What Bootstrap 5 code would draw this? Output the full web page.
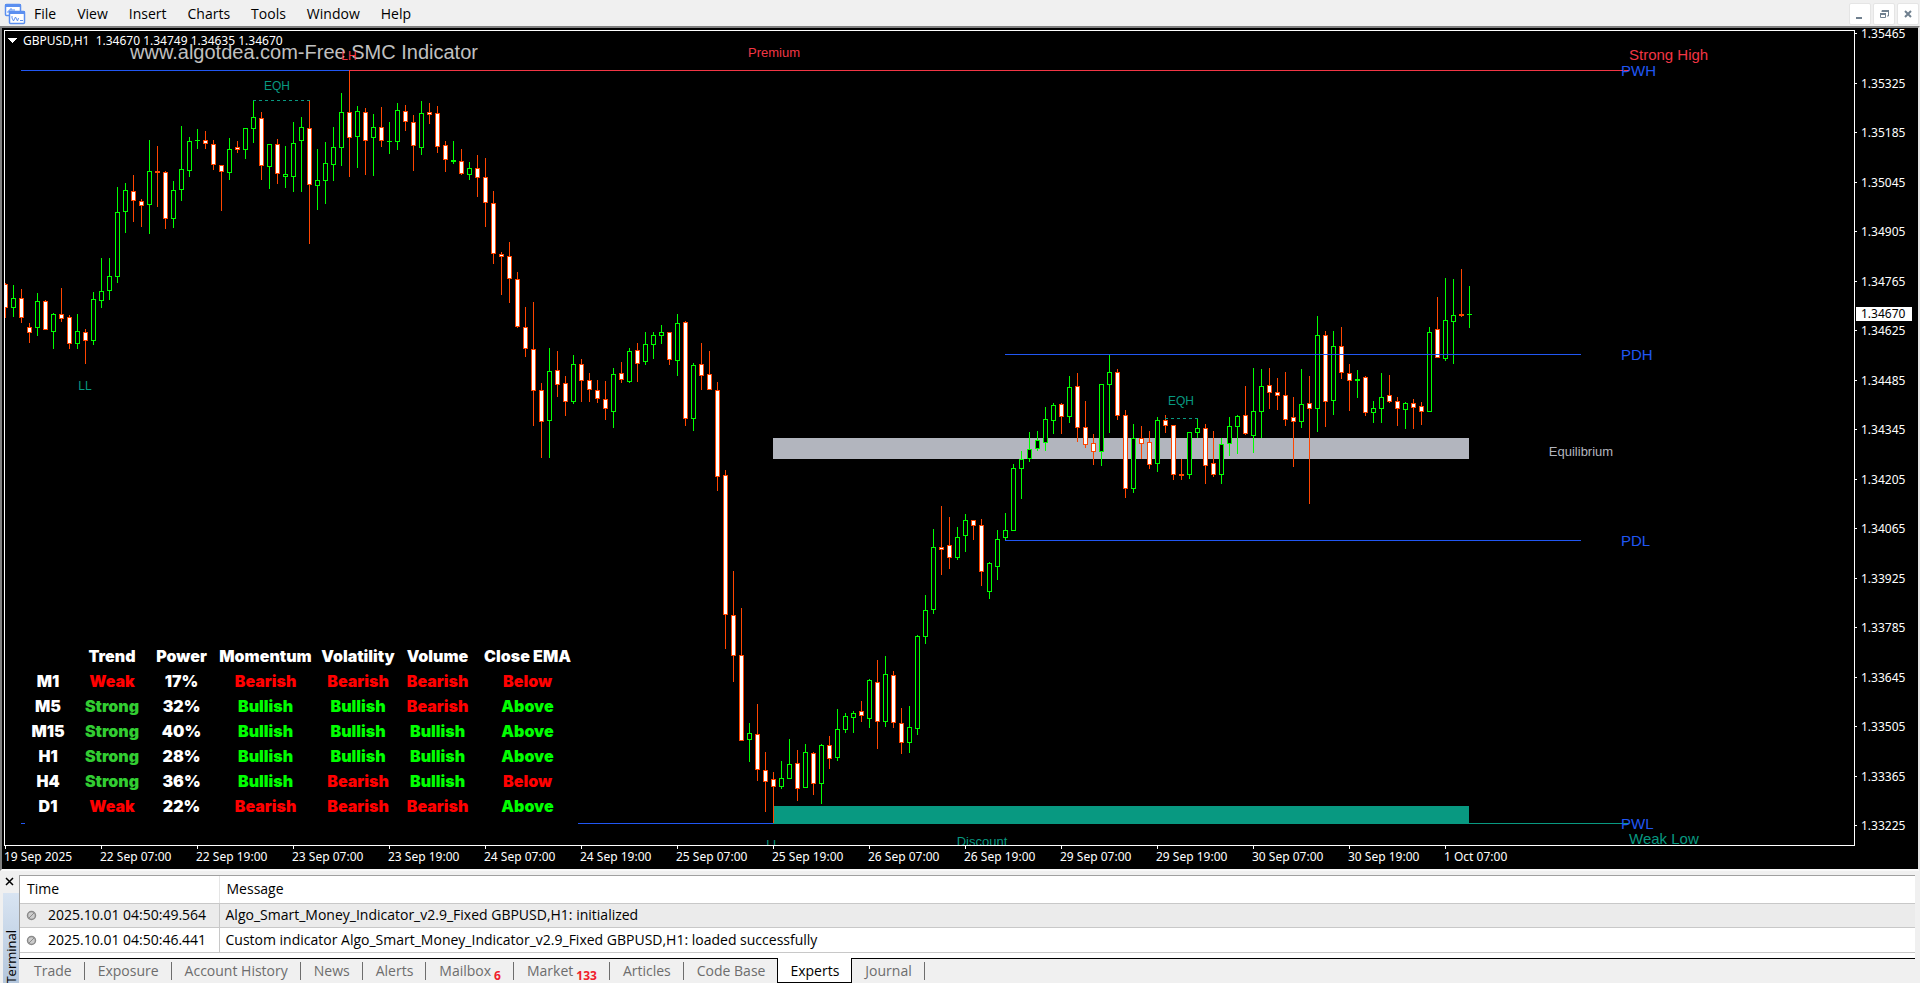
<!DOCTYPE html>
<html lang="en">
<head>
<meta charset="utf-8">
<meta name="viewport" content="width=device-width, initial-scale=1">
<title>GBPUSD,H1</title>
<link href="https://cdn.jsdelivr.net/npm/bootstrap@5.3.0/dist/css/bootstrap.min.css" rel="stylesheet">
<style>
  body { background: #f0f0f0; color: #000; font: 14px/20px "Open Sans", "Noto Sans", sans-serif; }
  button { font: inherit; color: inherit; }

  /* menu bar */
  .menubar { height: 26px; padding: 2px 1px 0 4px; }
  .menubar .app-icon { width: 22px; height: 22px; margin-right: 8px; }
  .menubar .menu-item { color: #000; margin-right: 21px; line-height: 24px; text-decoration: none; }
  .mdi { gap: 2px; }
  .mdi button { width: 22px; height: 22px; border: 1px solid #e5e5e5; border-radius: 2px; background: #fff; }

  /* chart window */
  .chart-window { min-height: 0; background: #000; border: 2px solid; border-color: #808080 #e3e3e3 #f8f8f8 #808080;
    display: grid; grid-template: minmax(0, 1fr) 23px / minmax(0, 1fr) 63px; }
  .plot { margin: 2px 0 0 2px; border: 1px solid #fff; overflow: hidden; }
  .plot > svg { display: block; width: 100%; height: 100%; }
  .plot text { font-family: "Liberation Sans", Arial, sans-serif; }
  .plot .t12 { font-size: 12px; }
  .plot .t13 { font-size: 13px; }
  .plot .t15 { font-size: 15px; }
  .plot .t20 { font-size: 20px; }
  .plot .legend-text { font: 12px "Noto Sans", sans-serif; }
  .c-red { fill: #f23645; } .c-blue { fill: #2157f3; } .c-teal { fill: #089981; }
  .axis { font: 12px/11px "Noto Sans", sans-serif; color: #fff; }
  .price-axis { padding: 0 0 15px; }
  .price-axis li { position: relative; padding-left: 6px; }
  .price-axis li::before { content: ""; position: absolute; left: 0; top: 5px; width: 2px; height: 1px; background: #fff; }
  .price-now { top: 279px; left: 1px; width: 56px; padding-left: 5px; line-height: 14px; background: #fff; color: #000; }
  .time-axis { padding-left: 3px; overflow: hidden; }
  .time-axis li { position: relative; flex: 0 0 96px; padding-top: 5px; text-indent: -1px; white-space: nowrap; }
  .time-axis li::before { content: ""; position: absolute; left: 0; top: 0; width: 1px; height: 3px; background: #fff; }

  /* multi-timeframe panel laid over the chart */
  .mtf { left: 20px; bottom: 15px; width: 553px; padding: 4px 3px 11px 0; background: #000; }
  .mtf table { width: 550px; table-layout: fixed; font: 900 16px/25px Inter, "Arial Black", sans-serif; text-align: center; color: #fff; white-space: nowrap; }
  .mtf th, .mtf td { padding: 0; font-weight: 900; text-align: center; }
  .up { color: #0f0; } .down { color: #f00; } .strong { color: #32cd32; }

  /* terminal */
  .terminal { padding: 4px 5px 0 0; }
  .side { width: 20px; padding-left: 3px; }
  .side .close-btn { height: 18px; }
  .side .side-tab { width: 16px; flex: 1 1 0; min-height: 0; background: linear-gradient(#d8e4f2, #b4c6dc); position: relative; overflow: hidden; }
  .side .side-tab span { writing-mode: vertical-rl; transform: rotate(180deg); line-height: 16px; font-size: 13px; position: absolute; top: 37px; left: 0; }
  .log { border: 1px solid #a0a0a0; border-width: 1px 0 0 1px; background: #fff; height: 83px; }
  .log table { width: 100%; table-layout: fixed; }
  .log th, .log td { font-weight: 400; padding: 0 0 0 6px; border-bottom: 1px solid #c8c8c8; border-right: 1px solid #c8c8c8; height: 25px; line-height: 24px; white-space: nowrap; }
  .log thead th { height: 27px; line-height: 26px; border-right-color: #e5e5e5; padding-left: 7px; }
  .log tr > :last-child { border-right: 0; }
  .log tbody tr:first-child td { background: #ebebeb; height: 24px; line-height: 22px; }
  .log td svg { margin-right: 11px; vertical-align: -1px; }
  .tabs { border-top: 1px solid #000; height: 25px; padding-left: 2px; color: #6d6d6d; }
  .tabs button { border: 0; background: none; height: 24px; padding: 0 13px; line-height: 24px; position: relative; white-space: nowrap; }
  .tabs button::after { content: ""; position: absolute; right: 0; top: 3px; width: 1px; height: 18px; background: #6d6d6d; }
  .tabs button.active { background: #fff; color: #000; border: 1px solid #000; border-top: 0; margin: -1px 0 0 -1px; height: 25px; padding: 1px 12px 0; }
  .tabs button.active::after { display: none; }
  .tabs sub { color: #f0202c; font-size: 12px; font-weight: 700; bottom: -4px; margin-left: 3px; line-height: 1; }
</style>
</head>
<body class="d-flex flex-column vh-100 overflow-hidden">

<nav class="menubar d-flex align-items-center flex-shrink-0">
  <svg class="app-icon" viewBox="0 0 22 22" fill="#fff" stroke="#5b8ff0">
    <rect x="1.500" y="1.500" width="15" height="11" rx="1" stroke-width="1.500"/>
    <path d="M1 2.500h16" stroke-width="3"/>
    <path d="M4 10V8h2V6h2v4M10 6v3h3" fill="none"/>
    <rect x="5.500" y="8.500" width="15" height="12" rx="1" stroke-width="1.500"/>
    <path d="M5 9.500h16" stroke-width="3"/>
    <path d="M8 13v2l1.500 3 2-4 2 4 1-3M16 17.500h3" fill="none"/>
  </svg>
  <a class="menu-item" href="#">File</a>
  <a class="menu-item" href="#">View</a>
  <a class="menu-item" href="#">Insert</a>
  <a class="menu-item" href="#">Charts</a>
  <a class="menu-item" href="#">Tools</a>
  <a class="menu-item" href="#">Window</a>
  <a class="menu-item" href="#">Help</a>
  <div class="mdi d-flex ms-auto">
    <button class="p-0 d-flex" aria-label="Minimize"><svg width="20" height="20"><path d="M6 14h6" stroke="#70808f" stroke-width="2"/></svg></button>
    <button class="p-0 d-flex" aria-label="Restore"><svg width="20" height="20" fill="none" stroke="#70808f"><path d="M8 8V6.500h6.500V12H13" stroke-width="1"/><path d="M8 7h7M6 10h6" stroke-width="2"/><path d="M6.500 9.500h5v4h-5z"/></svg></button>
    <button class="p-0 d-flex" aria-label="Close"><svg width="20" height="20"><path d="M7 7l6 6M13 7l-6 6" stroke="#70808f" stroke-width="2"/></svg></button>
  </div>
</nav>

<main class="chart-window flex-grow-1">
  <div class="plot position-relative">
    <svg shape-rendering="crispEdges">
      <g transform="translate(-5 -31)">
        <rect x="773" y="438" width="696" height="21" fill="#b2b5be"/>
        <rect x="773" y="806" width="696" height="18" class="c-teal"/>
        <g id="candles"></g>
        <g class="c-blue">
          <rect x="21" y="70" width="328" height="1"/>
          <rect x="1005" y="354" width="576" height="1"/>
          <rect x="1005" y="540" width="576" height="1"/>
          <rect x="21" y="823" width="752" height="1"/>
        </g>
        <rect x="349" y="70" width="1280" height="1" class="c-red"/>
        <rect x="773" y="823" width="856" height="1" class="c-teal"/>
        <path d="M253 100.500h57M1165 418.500h33" stroke="#089981" stroke-dasharray="3 3"/>
        <path d="M8 38h9l-4.500 5z" fill="#fff"/>
        <text class="legend-text" x="23" y="45" fill="#fff">GBPUSD,H1&#160; 1.34670 1.34749 1.34635 1.34670</text>
        <text class="t20" x="130" y="59" fill="#c0c0c0">www.algotdea.com-Free SMC Indicator</text>
        <g text-anchor="middle">
          <text class="t12 c-red" x="349" y="60">LH</text>
          <text class="t12 c-teal" x="277" y="90">EQH</text>
          <text class="t12 c-teal" x="85" y="390">LL</text>
          <text class="t12 c-teal" x="1181" y="405">EQH</text>
          <text class="t12 c-teal" x="773" y="849">LL</text>
          <text class="t13 c-red" x="774" y="57">Premium</text>
          <text class="t13 c-teal" x="982" y="846">Discount</text>
          <text class="t13" x="1581" y="456" fill="#b2b5be">Equilibrium</text>
        </g>
        <g class="t15">
          <text class="c-red" x="1629" y="60">Strong High</text>
          <text class="c-blue" x="1621" y="76">PWH</text>
          <text class="c-blue" x="1621" y="360">PDH</text>
          <text class="c-blue" x="1621" y="546">PDL</text>
          <text class="c-blue" x="1621" y="829">PWL</text>
          <text class="c-teal" x="1629" y="844">Weak Low</text>
        </g>
      </g>
    </svg>
    <div class="mtf position-absolute">
      <table>
        <colgroup><col style="width:46px"><col style="width:82px"><col style="width:57px"><col style="width:111px"><col style="width:74px"><col style="width:85px"><col style="width:95px"></colgroup>
        <thead><tr><th></th><th>Trend</th><th>Power</th><th>Momentum</th><th>Volatility</th><th>Volume</th><th>Close EMA</th></tr></thead>
        <tbody>
          <tr><th>M1</th><td class="down">Weak</td><td>17%</td><td class="down">Bearish</td><td class="down">Bearish</td><td class="down">Bearish</td><td class="down">Below</td></tr>
          <tr><th>M5</th><td class="strong">Strong</td><td>32%</td><td class="up">Bullish</td><td class="up">Bullish</td><td class="down">Bearish</td><td class="up">Above</td></tr>
          <tr><th>M15</th><td class="strong">Strong</td><td>40%</td><td class="up">Bullish</td><td class="up">Bullish</td><td class="up">Bullish</td><td class="up">Above</td></tr>
          <tr><th>H1</th><td class="strong">Strong</td><td>28%</td><td class="up">Bullish</td><td class="up">Bullish</td><td class="up">Bullish</td><td class="up">Above</td></tr>
          <tr><th>H4</th><td class="strong">Strong</td><td>36%</td><td class="up">Bullish</td><td class="down">Bearish</td><td class="up">Bullish</td><td class="down">Below</td></tr>
          <tr><th>D1</th><td class="down">Weak</td><td>22%</td><td class="down">Bearish</td><td class="down">Bearish</td><td class="down">Bearish</td><td class="up">Above</td></tr>
        </tbody>
      </table>
    </div>
  </div>
  <div class="position-relative d-flex">
    <ul class="axis price-axis list-unstyled d-flex flex-column justify-content-between flex-grow-1 mb-0">
      <li>1.35465</li><li>1.35325</li><li>1.35185</li><li>1.35045</li><li>1.34905</li><li>1.34765</li><li>1.34625</li><li>1.34485</li><li>1.34345</li><li>1.34205</li><li>1.34065</li><li>1.33925</li><li>1.33785</li><li>1.33645</li><li>1.33505</li><li>1.33365</li><li>1.33225</li>
    </ul>
    <div class="axis price-now position-absolute">1.34670</div>
  </div>
  <ul class="axis time-axis list-unstyled d-flex mb-0">
    <li>19 Sep 2025</li><li>22 Sep 07:00</li><li>22 Sep 19:00</li><li>23 Sep 07:00</li><li>23 Sep 19:00</li><li>24 Sep 07:00</li><li>24 Sep 19:00</li><li>25 Sep 07:00</li><li>25 Sep 19:00</li><li>26 Sep 07:00</li><li>26 Sep 19:00</li><li>29 Sep 07:00</li><li>29 Sep 19:00</li><li>30 Sep 07:00</li><li>30 Sep 19:00</li><li>1 Oct 07:00</li>
  </ul>
</main>

<section class="terminal d-flex flex-shrink-0">
  <div class="side d-flex flex-column">
    <button class="close-btn p-0 border-0 bg-transparent d-flex align-items-start" aria-label="Close terminal"><svg width="14" height="12"><path d="M3 3l7 7M10 3l-7 7" stroke="#000" stroke-width="1.500"/></svg></button>
    <div class="side-tab"><span>Terminal</span></div>
  </div>
  <div class="flex-grow-1">
    <div class="log">
      <table>
        <colgroup><col style="width:199px"><col></colgroup>
        <thead><tr><th>Time</th><th>Message</th></tr></thead>
        <tbody>
          <tr><td><svg width="11" height="11"><circle cx="5.500" cy="5.500" r="4" fill="#ccc" stroke="#8a8a8a" stroke-width="1.500"/><path d="M3 8l5-5" stroke="#8a8a8a"/></svg>2025.10.01 04:50:49.564</td><td>Algo_Smart_Money_Indicator_v2.9_Fixed GBPUSD,H1: initialized</td></tr>
          <tr><td><svg width="11" height="11"><circle cx="5.500" cy="5.500" r="4" fill="#ccc" stroke="#8a8a8a" stroke-width="1.500"/><path d="M3 8l5-5" stroke="#8a8a8a"/></svg>2025.10.01 04:50:46.441</td><td>Custom indicator Algo_Smart_Money_Indicator_v2.9_Fixed GBPUSD,H1: loaded successfully</td></tr>
        </tbody>
      </table>
    </div>
    <div class="tabs d-flex" role="tablist">
      <button role="tab">Trade</button><button role="tab">Exposure</button><button role="tab">Account History</button><button role="tab">News</button><button role="tab">Alerts</button><button role="tab">Mailbox<sub>6</sub></button><button role="tab">Market<sub>133</sub></button><button role="tab">Articles</button><button role="tab">Code Base</button><button role="tab" class="active" aria-selected="true">Experts</button><button role="tab">Journal</button>
    </div>
  </div>
</section>

<script src="https://cdn.jsdelivr.net/npm/bootstrap@5.3.0/dist/js/bootstrap.bundle.min.js"></script>
<script>
// One bar per entry: direction (g up, r down), high, body top, body bottom, low
const bars = `r283,284,308,318 g285,298,308,317 r289,298,318,323 r323,327,333,343 g293,301,328,336 r300,301,330,330 g313,314,332,349 r288,314,319,322 r315,317,344,349 g314,331,344,349
r329,332,341,364 g292,299,341,345 g258,291,301,308 g258,276,291,300 g187,212,277,283 g183,190,212,233 r175,191,201,222 r199,201,206,227 g140,171,205,234 r146,171,173,207
r171,172,219,229 g181,190,219,228 g126,169,190,201 g137,141,171,177 g129,140,141,149 r131,140,144,149 r140,144,165,170 r165,165,172,211 g138,149,173,180 r141,147,150,153
g128,128,150,159 g100,117,129,143 r112,118,166,180 g144,144,167,189 r139,144,174,184 g146,174,177,188 g122,143,177,192 g117,127,141,192 r100,128,185,244 g149,180,186,210
g142,163,181,204 g127,147,165,181 g93,112,148,166 r70,112,138,177 g106,111,137,168 r108,112,141,175 g114,127,138,176 r107,127,141,147 g122,141,142,154 g103,110,142,150
r105,111,122,131 r115,122,146,171 g101,113,148,155 r103,112,115,124 r106,113,147,153 r141,145,160,172 g141,160,162,164 r149,161,174,175 g162,168,175,180 r155,168,178,197
r158,177,203,227 r191,203,254,264 r252,254,257,295 r242,256,279,303 r272,279,327,328 r307,327,349,357 r302,349,391,426 r383,390,422,458 g348,371,421,458 r351,370,385,397
r376,383,402,416 g355,364,402,404 r359,364,381,402 r373,380,390,402 r380,390,399,403 r381,399,409,420 g368,374,412,428 r362,373,380,383 g348,351,382,383 r343,350,364,382
g332,344,362,365 g332,335,345,359 g325,332,336,344 r332,332,360,365 g314,323,361,376 r321,322,419,426 g363,365,419,431 r343,364,376,390 r351,374,390,390 r382,390,477,491
r470,475,615,649 r571,615,656,682 r608,655,741,741 g723,733,740,762 r704,734,770,781 r752,770,782,812 r772,779,787,823 g761,778,787,789 g739,764,779,779 r750,763,789,801
g744,752,788,788 r752,753,784,795 g744,745,784,804 r736,745,759,769 g709,729,758,761 g713,716,730,733 g711,713,718,733 r701,711,716,722 g679,680,719,728 r660,682,722,749
g656,674,722,727 r671,675,723,728 r708,723,743,754 g706,727,743,753 g635,636,729,735 g595,610,637,644 g529,547,610,614 r506,547,550,575 r517,545,558,569 g527,537,558,560
g514,520,536,552 r520,520,526,540 r519,525,572,586 g562,563,592,599 g530,539,567,580 g513,530,538,540 g464,468,531,531 g451,459,469,499 g432,449,459,462 g431,440,449,451
g407,419,443,451 g403,405,421,434 r403,404,417,434 g376,387,417,423 r373,386,428,442 r401,427,445,448 r434,443,452,465 g384,384,452,466 g355,372,385,433 r369,372,416,420
r410,415,489,498 g424,438,489,493 r426,438,444,459 r431,442,465,469 g417,420,464,472 r415,420,426,433 r425,425,475,480 r459,474,476,480 g432,432,475,479 g418,428,433,438
r424,428,466,484 r431,463,475,477 g438,444,475,484 g417,426,444,456 g415,416,427,454 r386,415,434,435 g368,411,436,453 g369,386,412,438 r368,385,393,409 r378,392,396,410
r372,395,420,426 r397,417,422,467 g369,404,422,428 r376,403,409,504 g316,335,409,432 r331,335,402,427 g331,346,401,415 r327,346,373,379 r364,373,381,411 g370,379,381,398
r376,377,413,416 g401,408,413,423 g373,397,409,423 r375,395,402,403 r397,401,409,426 g402,403,410,429 r399,403,408,429 r402,406,412,425 g327,332,412,412 r297,329,358,358
g278,320,359,361 g279,315,322,364 r269,314,316,317 g286,314,315,328`.split(/\s+/);
const box = (x, y, w, h, c) => h > 0 ? `<rect x="${x}" y="${y}" width="${w}" height="${h}" fill="${c}"/>` : '';
document.getElementById('candles').innerHTML = bars.map((bar, i) => {
  const up = bar[0] === 'g', x = 5 + 8 * i;
  const [hi, top, bot, lo] = bar.slice(1).split(',').map(Number);
  const edge = up ? '#00ff00' : '#ff4500';
  return box(x, hi, 1, lo - hi, edge) + box(x - 2, top, 5, bot - top, edge) + box(x - 1, top + 1, 3, bot - top - 2, up ? '#000' : '#fff');
}).join('');
</script>
</body>
</html>
